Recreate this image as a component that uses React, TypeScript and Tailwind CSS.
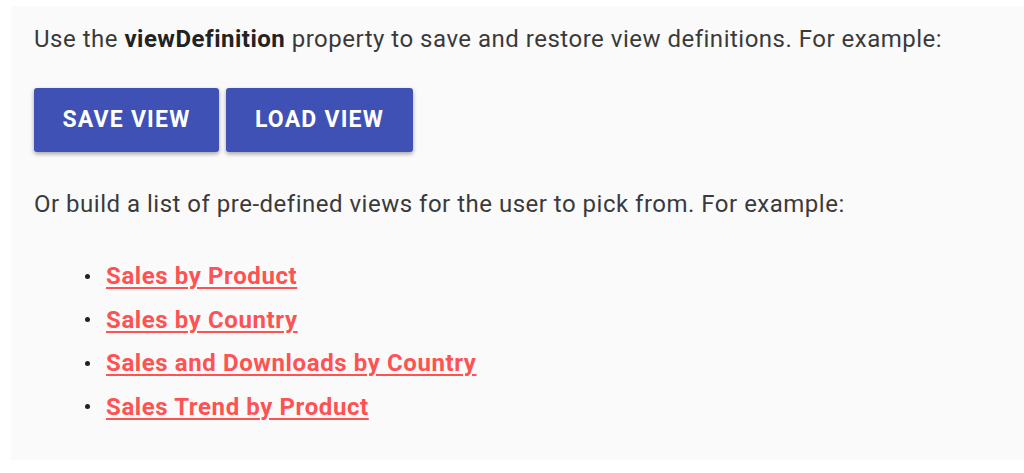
import React from "react";

const links = [
  "Sales by Product",
  "Sales by Country",
  "Sales and Downloads by Country",
  "Sales Trend by Product",
];

export default function App() {
  return (
    <div className="w-[1024px] h-[473px] bg-white pt-[6px] pl-[11px] pb-[13px]" style={{ fontFamily: "Roboto, 'Liberation Sans', sans-serif" }}>
      <div className="h-full bg-[#fafafa] pl-[23px] pt-[20px] text-[24px] tracking-[0.5px] text-[#3a3a3a]">
        <p className="leading-[26px]">
          Use the <b className="font-bold text-[#222]">viewDefinition</b> property to save and restore view definitions. For example:
        </p>
        <div className="flex gap-[7px] mt-[36px]">
          <button className="w-[185px] h-[64px] rounded-[3px] bg-[#3f51b5] text-white font-bold text-[23px] tracking-[1.2px] shadow-[0_2px_4px_rgba(0,0,0,0.35)]">
            SAVE VIEW
          </button>
          <button className="w-[187px] h-[64px] rounded-[3px] bg-[#3f51b5] text-white font-bold text-[23px] tracking-[1.2px] shadow-[0_2px_4px_rgba(0,0,0,0.35)]">
            LOAD VIEW
          </button>
        </div>
        <p className="leading-[26px] mt-[39px]">
          Or build a list of pre-defined views for the user to pick from. For example:
        </p>
        <ul className="mt-[46px] pl-[51px] flex flex-col gap-[17.5px]">
          {links.map((l) => (
            <li key={l} className="flex items-center leading-[26px]">
              <span className="w-[5px] h-[5px] rounded-full bg-[#222] mr-[16px]" />
              <a href="#" className="text-[#ff5252] font-bold tracking-[0.6px] underline decoration-[2px] underline-offset-[3px]">
                {l}
              </a>
            </li>
          ))}
        </ul>
      </div>
    </div>
  );
}
